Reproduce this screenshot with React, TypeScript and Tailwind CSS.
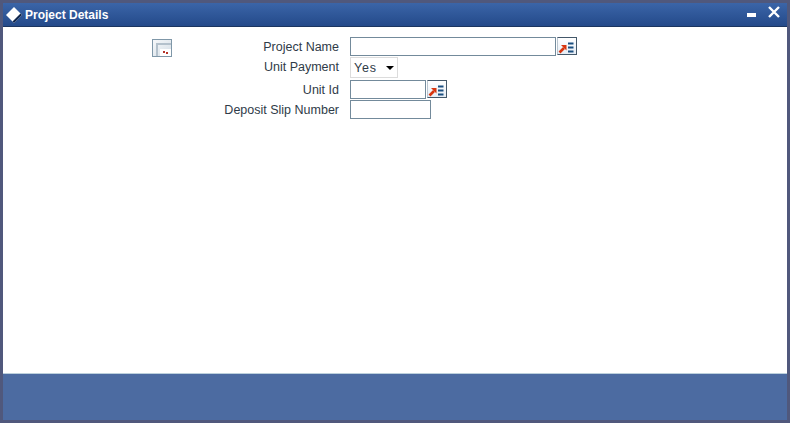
import React from 'react';

const LovButton: React.FC = () => (
  <button className="w-[20px] h-[18px] ml-px border border-[#44586a] border-l-[#b9c5cf] bg-gradient-to-b from-white to-[#e6edf5] flex items-center justify-center">
    <svg width="18" height="16" viewBox="0 0 18 16" className="shrink-0">
      <path d="M3 7 L8.5 7 L8.5 12.5 Z" fill="#d8350f" />
      <path d="M1.5 14.5 L6 10" stroke="#d8350f" strokeWidth="2.6" />
      <path d="M10 5.5h5.5M10 9.5h5.5M10 13.5h5.5" stroke="#1b4f80" strokeWidth="2" />
    </svg>
  </button>
);

const Field: React.FC<{ width: string }> = ({ width }) => (
  <input className={`${width} block h-[19px] border border-[#738a9b] bg-white outline-none`} />
);

const labels = [
  { text: 'Project Name', height: 'h-5' },
  { text: 'Unit Payment', height: 'h-[21px]' },
  { text: 'Unit Id', height: 'h-[22px] pt-[2px]' },
  { text: 'Deposit Slip Number', height: 'h-[20px]' },
];

const App: React.FC = () => {
  return (
    <div className="w-[790px] h-[423px] bg-[#50587c] p-[3px] flex flex-col font-['Liberation_Sans',Arial,sans-serif] overflow-hidden">
      <div className="h-[24px] shrink-0 bg-gradient-to-b from-[#3b65a8] to-[#244a8a] border-b border-[#1b3560] flex items-center">
        <svg width="18" height="18" viewBox="0 0 18 18" className="ml-[2px]">
          <path d="M9 1 L17 9 L9 17 L1 9 Z" fill="#ffffff" />
          <path d="M17 9 L9 17 L7.5 15.5 L15.5 7.5 Z" fill="#10264c" />
        </svg>
        <span className="ml-[2px] pt-px text-[12px] font-bold text-white">Project Details</span>
        <div className="ml-auto flex items-start h-full">
          <div className="w-[9px] h-[4px] bg-white mt-[10px] mr-[12px]" />
          <svg width="12" height="12" viewBox="0 0 12 12" className="mt-[3px] mr-[7px]">
            <path d="M1 1 L11 11 M11 1 L1 11" stroke="#ffffff" strokeWidth="2.4" />
          </svg>
        </div>
      </div>

      <div className="flex-1 bg-white flex items-start pl-[149px] pt-[10px] border-b border-[#bcd0dc]">
        <button className="w-[20px] h-[18px] mt-[2px] border border-[#7f97a8] bg-gradient-to-br from-[#f6f8fa] to-[#d5dee6] relative">
          <span className="absolute left-[3px] top-[3px] right-0 bottom-0 border-l-2 border-t-2 border-[#b4c1cc]" />
          <span className="absolute right-0 bottom-0 w-[11px] h-[7px] bg-white" />
          <span className="absolute right-[3px] bottom-[2px] w-[2px] h-[2px] bg-[#b5342a]" />
          <span className="absolute right-[6px] bottom-[3px] w-[2px] h-[2px] bg-[#b5342a]" />
        </button>
        <div className="w-[167px] flex flex-col items-end text-[12.5px] text-[#2f3b48]">
          {labels.map((l) => (
            <div key={l.text} className={`${l.height} flex items-center`}>
              {l.text}
            </div>
          ))}
        </div>
        <div className="ml-[11px] flex flex-col">
          <div className="flex h-5">
            <Field width="w-[206px]" />
            <LovButton />
          </div>
          <div className="h-[21px]">
            <div className="w-[48px] h-[21px] border border-[#dcdcdc] flex items-center pl-[3px] pt-px text-[12.5px] text-[#2f3b48] tracking-[0.8px]">
              Yes
              <span className="ml-[9px] w-0 h-0 border-x-[4px] border-x-transparent border-t-[4px] border-t-black" />
            </div>
          </div>
          <div className="flex h-5 mt-[2px]">
            <Field width="w-[76px]" />
            <LovButton />
          </div>
          <div className="h-5">
            <Field width="w-[81px]" />
          </div>
        </div>
      </div>

      <div className="h-[46px] shrink-0 bg-[#4c6ba1]" />
    </div>
  );
};

export default App;
